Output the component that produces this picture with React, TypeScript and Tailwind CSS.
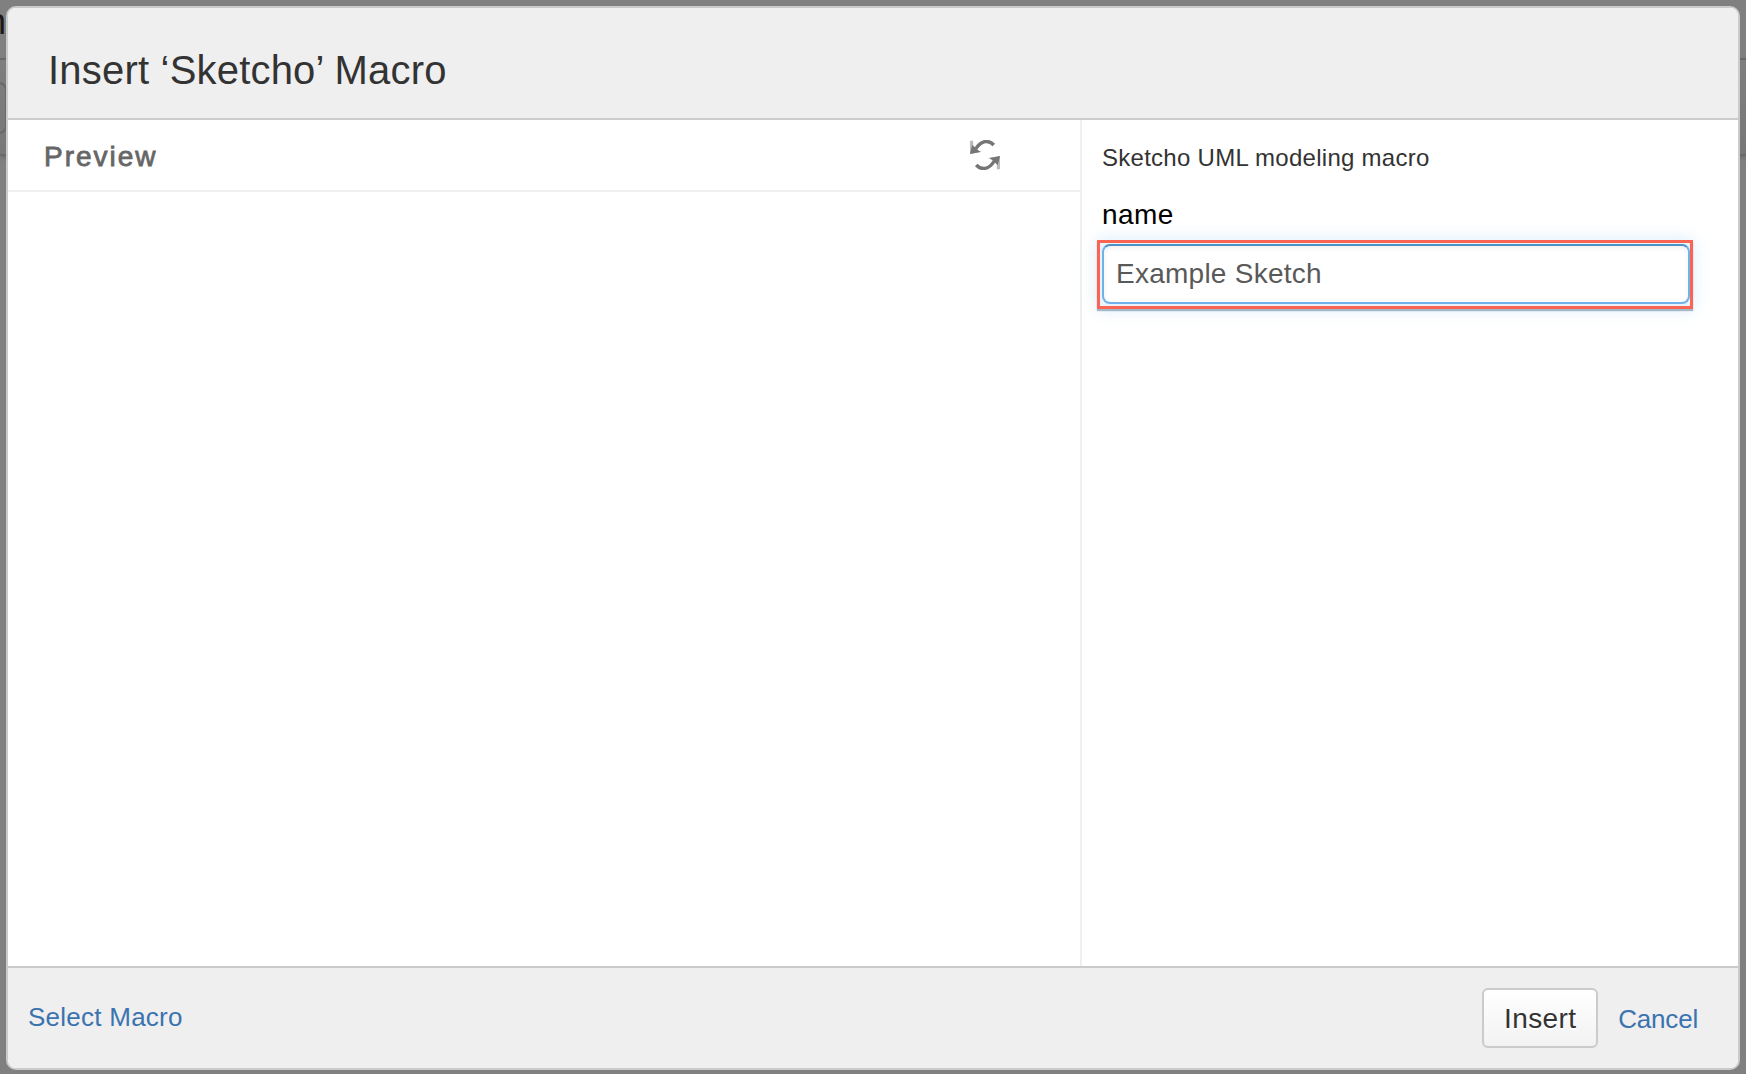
function RefreshIcon() {
  return (
    <svg className="block h-[30px] w-[30px]" viewBox="0 0 30 30" fill="none" aria-hidden="true">
      <path d="M23.800 5C19-.2 11.500-.2 6 8.600" stroke="#757575" strokeWidth="3.400" />
      <path d="M0 14V1L3 .600 3.400 6.600 7.600 10.200 12 11.800Z" fill="#757575" fillOpacity=".5" />
      <path d="M0 14 2.200 5 4.600 7 8.500 10.400 10.500 12Z" fill="#757575" />
      <path d="M6.200 25C11 30.200 18.500 30.200 24 21.400" stroke="#757575" strokeWidth="3.400" />
      <path d="M30 16V29L27 29.400 26.600 23.400 22.400 19.800 18 18.200Z" fill="#757575" fillOpacity=".5" />
      <path d="M30 16 27.800 25 25.400 23 21.500 19.600 19.500 18Z" fill="#757575" />
    </svg>
  );
}

function Backdrop() {
  return (
    <div className="absolute inset-0 overflow-hidden" aria-hidden="true">
      <div className="absolute inset-x-0 top-[58px] h-[98px] border-y-2 border-[#696969] bg-linear-to-b from-[#7f7f7f] to-[#777] shadow-[0_2px_4px_rgba(0,0,0,0.15)]" />
      <div className="absolute -left-10 top-[82px] h-[52px] w-[47px] rounded-lg border-2 border-[#696969]" />
      <span className="absolute -left-[14px] top-[-1px] text-[36px] leading-[46px] text-[#1a1a1a]">n</span>
    </div>
  );
}

export default function App() {
  return (
    <div className="relative h-[1074px] w-[1746px] overflow-hidden bg-[#808080] pl-[6px] pt-[6px] font-['Liberation_Sans',Arial,sans-serif]">
      <Backdrop />
      <section className="relative flex h-[1064px] w-[1734px] flex-col overflow-hidden rounded-[10px] border-2 border-[#cbcbcb] bg-white">
        <header className="flex h-28 shrink-0 items-center border-b-2 border-[#cbcbcb] bg-[#efefef] pl-10 pt-[13px]">
          <h1 className="whitespace-nowrap text-[40px] leading-none tracking-[0.2px] text-[#333]">Insert ‘Sketcho’ Macro</h1>
        </header>

        <div className="flex min-h-0 flex-1">
          <div className="w-[1074px] shrink-0 border-r-2 border-[#efefef]">
            <div className="flex h-[72px] items-center justify-between border-b-2 border-[#efefef] pl-9 pr-20">
              <h2 className="pt-1 text-[28px] leading-8 tracking-[2px] text-[#666] [-webkit-text-stroke:0.8px_#666]">Preview</h2>
              <button className="-mt-[1px]" aria-label="Refresh preview">
                <RefreshIcon />
              </button>
            </div>
          </div>
          <form className="flex-1 pl-[15px] pt-6">
            <p className="pl-[5px] text-[24px] leading-7 tracking-[0.27px] text-[#333]">Sketcho UML modeling macro</p>
            <label htmlFor="macro-name" className="mt-[27px] block pl-[5px] text-[28px] leading-8 tracking-[0.4px] text-black">
              name
            </label>
            <div className="mt-[9px] w-[596px] border-[3px] border-[#fa6453] bg-[#eaf3fb] pb-[2px] pl-[2px] pt-[1px] shadow-[0_2px_1px_rgba(90,120,140,0.5),0_0_16px_rgba(82,168,236,0.22)]">
              <input
                id="macro-name"
                type="text"
                defaultValue="Example Sketch"
                className="block h-[60px] w-[588px] rounded-lg border-2 border-[#70b3eb] border-t-[#4f92c6] bg-white px-3 text-[28px] tracking-[0.25px] text-[#595959] shadow-[inset_0_2px_5px_rgba(0,0,0,0.06)] outline-none"
              />
            </div>
          </form>
        </div>

        <footer className="flex h-[102px] shrink-0 items-center justify-between border-t-2 border-[#cbcbcb] bg-[#efefef] pl-5 pr-10">
          <a href="#" className="-mt-[2px] text-[26px] leading-8 tracking-[0.25px] text-[#3b73af]">Select Macro</a>
          <div className="flex items-center gap-5">
            <button className="h-[60px] w-[116px] rounded-md border-2 border-[#cbcbcb] bg-linear-to-b from-white to-[#f2f2f2] pt-[2px] text-[28px] tracking-[0.4px] text-[#333] [text-shadow:0_2px_0_#fff]">
              Insert
            </button>
            <a href="#" className="mt-[2px] text-[26px] leading-8 tracking-[-0.2px] text-[#3b73af]">Cancel</a>
          </div>
        </footer>
      </section>
    </div>
  );
}
